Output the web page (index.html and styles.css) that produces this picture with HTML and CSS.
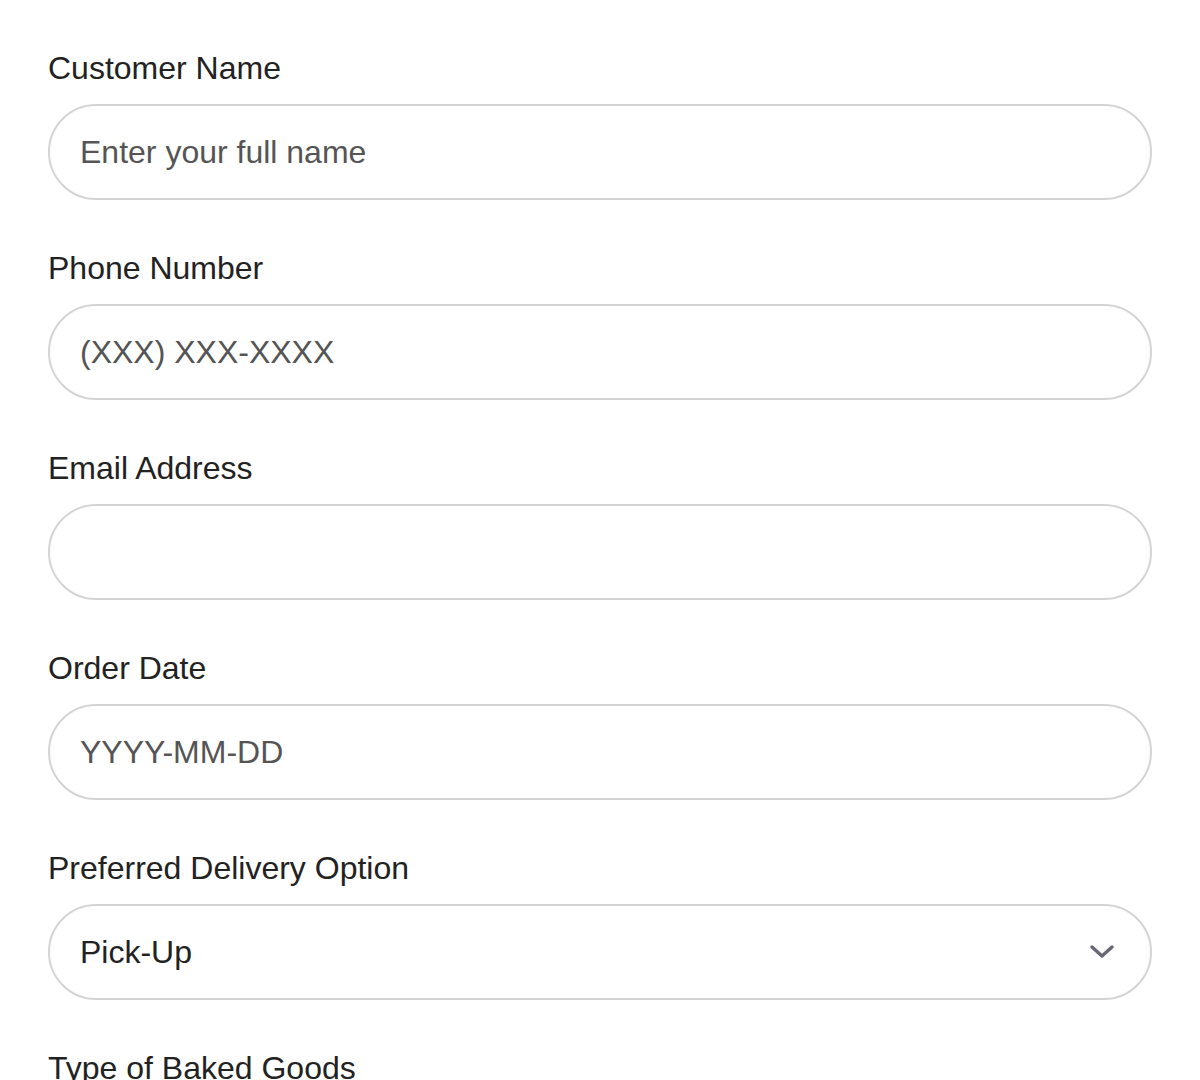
FILE: index.html
```html
<!DOCTYPE html>
<html lang="en">
<head>
  <meta charset="UTF-8" />
  <meta name="viewport" content="width=device-width, initial-scale=1.0" />
  <title>Bakery Order</title>
  <link rel="stylesheet" href="styles.css">
</head>

<body>

  <form class="order-form">
    <div class="field">
      <label for="nome">Customer Name</label>
      <input type="text" id="nome" name="nome" placeholder="Enter your full name">
    </div>

    <div class="field">
      <label for="telefone">Phone Number</label>
      <input type="tel" id="telefone" name="telefone" placeholder="(XXX) XXX-XXXX">
    </div>

    <div class="field">
      <label for="email">Email Address</label>
      <input type="email" id="email" name="email">
    </div>

    <div class="field">
      <label for="data">Order Date</label>
      <input type="text" id="data" name="data" placeholder="YYYY-MM-DD">
    </div>

    <div class="field">
      <label for="entrega">Preferred Delivery Option</label>
      <div class="select-wrap">
        <select id="entrega" name="entrega">
          <option>Pick-Up</option>
          <option>Delivery</option>
        </select>
        <svg class="chevron" width="26" height="16" viewBox="0 0 26 16" aria-hidden="true">
          <path d="M3 3 L13 12 L23 3" fill="none" stroke="#676775" stroke-width="3.4" stroke-linecap="round" stroke-linejoin="round"/>
        </svg>
      </div>
    </div>

    <div class="field">
      <label for="tipo">Type of Baked Goods</label>
    </div>
  </form>

</body>
</html>
```

FILE: styles.css
```css
* {
  margin: 0;
  padding: 0;
  box-sizing: border-box;
}

body {
  font-family: 'Liberation Sans', Arial, sans-serif;
  background-color: #ffffff;
  color: #222222;
}

.order-form {
  padding: 49px 48px 0;
}

.field {
  margin-bottom: 49px;
}

label {
  display: block;
  font-size: 32px;
  line-height: 38px;
  margin-bottom: 17px;
  color: #222222;
}

input,
select {
  display: block;
  width: 100%;
  height: 96px;
  padding: 0 30px;
  border: 2px solid #d4d4d4;
  border-radius: 48px;
  background-color: #ffffff;
  font-family: 'Liberation Sans', Arial, sans-serif;
  font-size: 32px;
  color: #222222;
  outline: none;
}

input::placeholder {
  color: #555555;
}

.select-wrap {
  position: relative;
}

select {
  appearance: none;
  -webkit-appearance: none;
}

.chevron {
  position: absolute;
  right: 37px;
  top: 40px;
  pointer-events: none;
}
```
